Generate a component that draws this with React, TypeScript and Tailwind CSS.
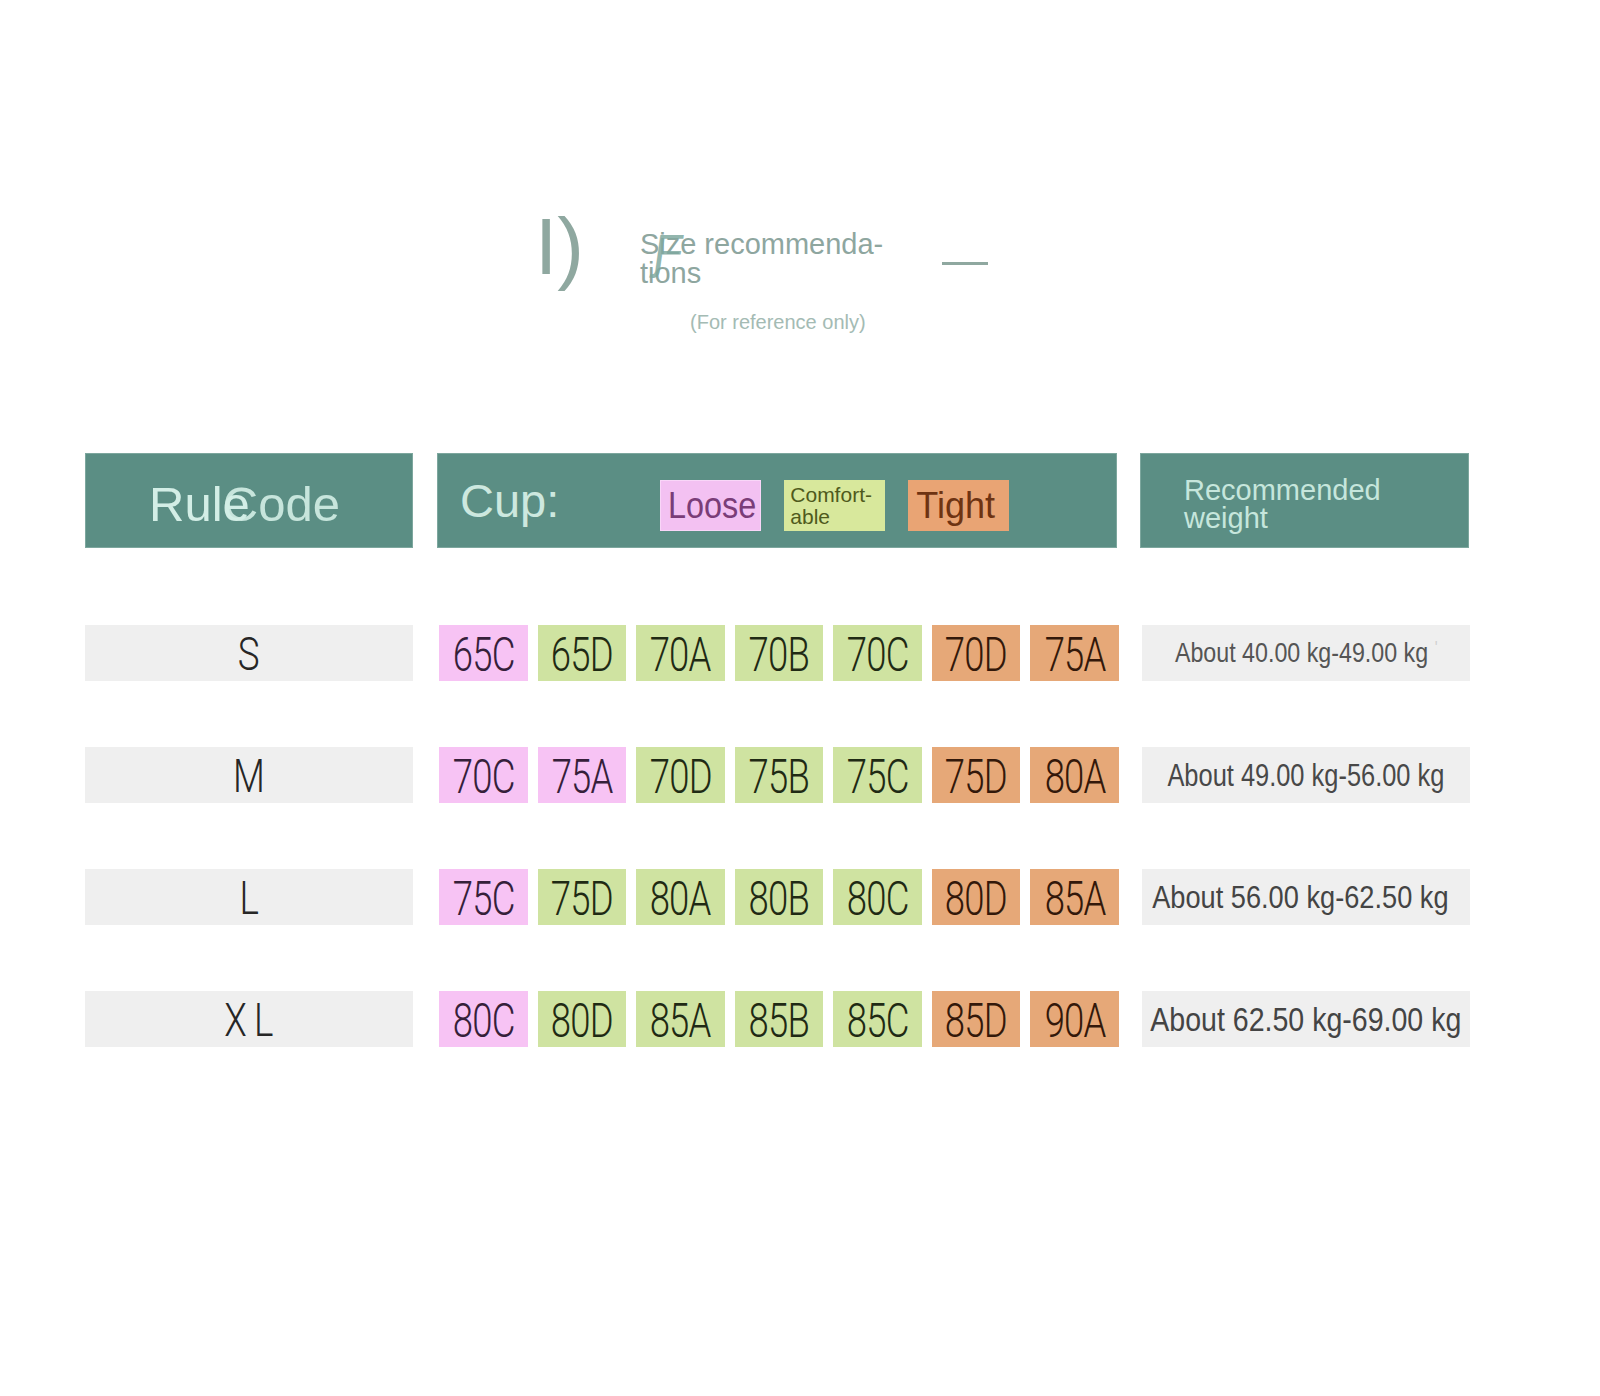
type Tone = "p" | "g" | "o";

const toneClass: Record<Tone, string> = {
  p: "bg-[#f7c3f4] text-[#35203a]",
  g: "bg-[#cfe3a1] text-[#1f2a14]",
  o: "bg-[#e6a878] text-[#33180a]",
};

const rows: {
  size: string;
  cups: [string, Tone][];
  weight: string;
  weightClass: string;
}[] = [
  {
    size: "S",
    cups: [
      ["65C", "p"],
      ["65D", "g"],
      ["70A", "g"],
      ["70B", "g"],
      ["70C", "g"],
      ["70D", "o"],
      ["75A", "o"],
    ],
    weight: "About 40.00 kg-49.00 kg",
    weightClass: "text-[28px] scale-x-[0.83] text-[#555555]",
  },
  {
    size: "M",
    cups: [
      ["70C", "p"],
      ["75A", "p"],
      ["70D", "g"],
      ["75B", "g"],
      ["75C", "g"],
      ["75D", "o"],
      ["80A", "o"],
    ],
    weight: "About 49.00 kg-56.00 kg",
    weightClass: "text-[31px] scale-x-[0.82] text-[#484848]",
  },
  {
    size: "L",
    cups: [
      ["75C", "p"],
      ["75D", "g"],
      ["80A", "g"],
      ["80B", "g"],
      ["80C", "g"],
      ["80D", "o"],
      ["85A", "o"],
    ],
    weight: "About 56.00 kg-62.50 kg",
    weightClass: "text-[32px] scale-x-[0.85] text-[#444444] mr-[12px]",
  },
  {
    size: "XL",
    cups: [
      ["80C", "p"],
      ["80D", "g"],
      ["85A", "g"],
      ["85B", "g"],
      ["85C", "g"],
      ["85D", "o"],
      ["90A", "o"],
    ],
    weight: "About 62.50 kg-69.00 kg",
    weightClass: "text-[33px] scale-x-[0.865] text-[#444444]",
  },
];

function SizeRow({ row }: { row: (typeof rows)[number] }) {
  return (
    <div className="flex h-[56px] items-stretch">
      <div className="flex w-[328px] items-center justify-center bg-[#efefef] pt-[2px]">
        <span
          className={`inline-block scale-x-[0.8] font-['Roboto',sans-serif] text-[46px] font-light leading-none text-[#262626] ${
            row.size === "XL" ? "tracking-[9px] pl-[9px]" : ""
          }`}
        >
          {row.size}
        </span>
      </div>
      <div className="ml-[26px] grid w-[680px] grid-cols-7 gap-[10px]">
        {row.cups.map(([label, tone], i) => (
          <div
            key={i}
            className={`flex items-center justify-center pt-[3px] ${toneClass[tone]}`}
          >
            <span className="inline-block scale-x-[0.76] font-['Roboto',sans-serif] text-[48px] font-light leading-none tracking-[-1px]">
              {label}
            </span>
          </div>
        ))}
      </div>
      <div className="ml-[23px] flex w-[328px] items-center justify-center bg-[#efefef]">
        <span
          className={`inline-block shrink-0 whitespace-nowrap font-['Liberation_Sans',Arial,sans-serif] leading-none ${row.weightClass}`}
        >
          {row.weight}
          {row.size === "S" && (
            <span className="ml-[8px] text-[18px] align-top text-[#d0d0d0]">'</span>
          )}
        </span>
      </div>
    </div>
  );
}

export default function App() {
  return (
    <div className="relative h-[1396px] w-[1600px] overflow-hidden bg-white font-['Liberation_Sans',Arial,sans-serif]">
      {/* title */}
      <div className="flex items-start pl-[535px] pt-[207px]">
        <span className="text-[80px] leading-none text-[#8fa8a0]">I)</span>
        <div className="relative ml-[56px] mt-[23px] text-[29px] leading-[29px] text-[#8ea69f]">
          Size recommenda-
          <br />
          tions
          <span className="absolute left-[14px] top-[-2px] inline-block skew-x-[-8deg] text-[48px] leading-none text-[#7fa9a0]/85">
            Ƒ
          </span>
        </div>
        <div className="ml-[59px] mt-[55px] h-[3px] w-[46px] bg-[#8fa8a0]" />
      </div>
      <div className="mt-[24px] pl-[690px] text-[20px] leading-none text-[#a4bbb4]">
        (For reference only)
      </div>

      {/* header */}
      <div className="ml-[85px] mt-[121px] flex h-[95px]">
        <div className="flex w-[328px] items-center border border-[#7da79e] bg-[#5b8e84] pl-[63px] pt-[8px]">
          <span className="text-[49px] leading-none text-[#d3eee6]">Rule</span>
          <span className="ml-[-27px] text-[49px] leading-none text-[#d3eee6]/90">
            Code
          </span>
        </div>
        <div className="ml-[24px] flex w-[680px] items-center border border-[#7da79e] bg-[#5b8e84] pl-[22px]">
          <span className="text-[47px] leading-none text-[#cde8df]">Cup:</span>
          <div className="ml-[101px] mt-[10px] flex gap-[23px]">
            <div className="flex h-[51px] w-[101px] items-center border border-[#f9d6f8] bg-[#f3c1f2] pl-[7px]">
              <span className="inline-block origin-left scale-x-[0.9] text-[36px] leading-none text-[#7a3d78]">
                Loose
              </span>
            </div>
            <div className="flex h-[51px] w-[101px] flex-col justify-center bg-[#d8e89c] pl-[6px] text-[21px] leading-[22px] text-[#4f5a1c]">
              <span>Comfort-</span>
              <span>able</span>
            </div>
            <div className="flex h-[51px] w-[101px] items-center bg-[#e9a474] pl-[8px]">
              <span className="text-[36px] leading-none text-[#6e3312]">Tight</span>
            </div>
          </div>
        </div>
        <div className="ml-[23px] flex w-[329px] items-center border border-[#7da79e] bg-[#5b8e84] pl-[43px] pt-[6px]">
          <span className="text-[29px] leading-[28px] text-[#c6e6dc]">
            Recommended
            <br />
            weight
          </span>
        </div>
      </div>

      {/* rows */}
      <div className="ml-[85px] mt-[77px] flex flex-col gap-[66px]">
        {rows.map((row) => (
          <SizeRow key={row.size} row={row} />
        ))}
      </div>
    </div>
  );
}
